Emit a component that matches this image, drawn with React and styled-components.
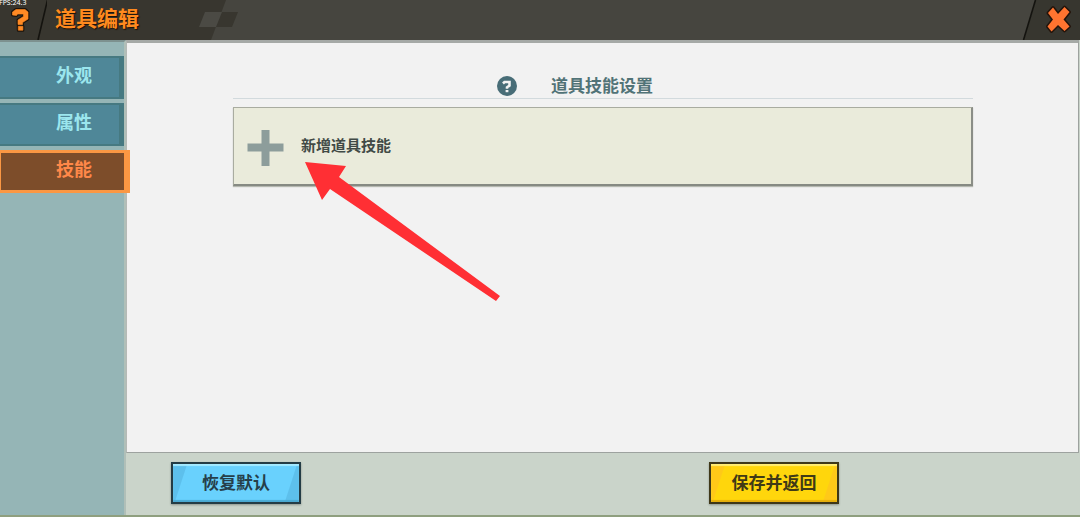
import React, { useState } from "react"
import styled, { createGlobalStyle } from "styled-components"

const GlobalStyle = createGlobalStyle`
    * {
        box-sizing: border-box;
    }

    body {
        margin: 0;
        font-family: "Noto Sans CJK SC", "Noto Sans", sans-serif;
        font-weight: 700;
    }

    button {
        font: inherit;
        color: inherit;
        cursor: pointer;
    }
`
const Page = styled.div`
    display: flex;
    flex-direction: column;
    min-height: 100vh;
    background: #cad4ca;
    border-bottom: 2px solid #8f9f7f;
`

//Top bar
const Header = styled.header`
    position: relative;
    display: flex;
    height: 40px;
    background: #46453f;
`
const Fps = styled.span`
    position: absolute;
    top: -1px;
    left: -1px;
    font-family: "Noto Sans", sans-serif;
    font-size: 7px;
    font-weight: 400;
    line-height: 8px;
    color: #fff;
`
const TitleArea = styled.div`
    display: flex;
    align-items: center;
    background: #38362f;
`
const IconButton = styled.button`
    display: block;
    padding: 0;
    border: 0;
    background: none;

    svg {
        display: block;
    }
`
const Title = styled.h1`
    margin: 0 0 6px;
    padding: 0 8px;
    width: 144px;
    font-size: 21px;
    line-height: 28px;
    color: #ff8a1f;
    text-shadow: 1px 1px 1px #1c1005;
`
const Checker = styled.svg`
    display: block;
    flex: none;
`
const CloseArea = styled.div`
    margin-left: auto;
`

//Side tabs
const Body = styled.div`
    display: flex;
    flex: 1;
`
const Side = styled.nav`
    display: flex;
    flex-direction: column;
    gap: 4px;
    width: 126px;
    padding-top: 14px;
    background: #95b5b6;
    border-right: 2px solid #b0bfb8;
    border-top: 2px solid #7d918f;
`
const Tab = styled.button`
    position: relative;
    height: 43px;
    width: ${(p) => (p.$active ? "130px" : "124px")};
    padding: ${(p) => (p.$active ? "0 0 8px 55px" : "0 0 8px 56px")};
    text-align: left;
    font-size: 18px;
    line-height: 24px;
    border: 0 solid;
    border-color: ${(p) => (p.$active ? "#fb9743" : "#467981")};
    border-width: ${(p) => (p.$active ? "3px 6px 3px 1px" : "2px 5px 2px 0")};
    background: ${(p) => (p.$active ? "#7d4d2a" : "#4f8798")};
    color: ${(p) => (p.$active ? "#ff8849" : "#9be6ee")};
`

//Content
const Main = styled.main`
    display: flex;
    flex-direction: column;
    flex: 1;
`
const Panel = styled.section`
    flex: 1;
    margin-right: 1px;
    padding: 30px 105px 30px 106px;
    background: #f2f2f2;
    border: 1px solid #9da29f;
    border-top: 3px solid #a5a9a6;
    border-left-color: #b5b9b6;
`
const Heading = styled.div`
    display: grid;
    grid-template-columns: 1fr auto 1fr;
    align-items: center;
    column-gap: 34px;
    height: 26px;
    margin-bottom: 8px;
    border-bottom: 1px solid #d2dadd;

    h2 {
        margin: 0;
        padding: 0 2px 2px 0;
        font-size: 17px;
        line-height: 22px;
        color: #517377;
    }
`
const HelpButton = styled(IconButton)`
    justify-self: end;
`
const Skills = styled.div`
    position: relative;
`
const AddSkill = styled.button`
    display: flex;
    align-items: center;
    gap: 17px;
    width: 100%;
    height: 79px;
    padding: 2px 13px 0;
    border: 1px solid #a9aca0;
    border-right: 2px solid #8b8e87;
    border-bottom: 2px solid #868a83;
    box-shadow: 0 1px 1px #b5b8b0;
    background: #eaebdb;
    color: #414a46;
    font-size: 15px;

    span {
        padding-bottom: 4px;
        line-height: 20px;
    }
`
const Arrow = styled.svg`
    position: absolute;
    top: 55px;
    left: 72px;
    pointer-events: none;
`

//Bottom buttons
const Footer = styled.footer`
    display: flex;
    justify-content: space-between;
    padding: 9px 241px 11px 45px;
`
const ActionButton = styled.button`
    width: 130px;
    height: 42px;
    padding: 0 0 2px;
    font-size: 17px;
    line-height: 24px;
    border: 2px solid ${(p) => p.$edge};
    box-shadow: 0 1px 2px #8b948c, inset 0 2px 1px ${(p) => p.$light}, inset 0 -2px 1px ${(p) => p.$dark};
    background: linear-gradient(
        108deg,
        ${(p) => p.$shine} 0 13px,
        ${(p) => p.$face} 14px calc(100% - 14px),
        ${(p) => p.$shine} calc(100% - 13px)
    );
    color: ${(p) => p.$ink};
`

function QuestionIcon() {
    const mark = "M12.5 12L16 9.5H25L28 12V19L22.5 22.5V24.5H18V20L23.5 16.5V14H17.5L16.5 15.5L12.5 15zM18.3 26.3h4.6v3.9h-4.6z"

    return (
        <svg width="47" height="40" viewBox="0 0 47 40" aria-hidden="true">
            <path d={mark} fill="#1d140c" stroke="#1d140c" strokeWidth="3" strokeLinejoin="round" />
            <path d={mark} fill="#ff8a24" stroke="#ff8a24" strokeWidth="0.6" strokeLinejoin="round" />
            <path d="M47.5 0 L38 40" stroke="#14130f" strokeWidth="1.6" />
        </svg>
    )
}

function CloseIcon() {
    const cross = "M31 7.5L36 14L42.5 7L47.5 12L41.5 19.5L47.5 26.5L42.5 31L36 25L29.5 31.5L25.5 26.5L31 19.5L26 13z"

    return (
        <svg width="58" height="40" viewBox="0 0 58 40" aria-hidden="true">
            <path d="M14 0H58V40H2z" fill="#37362f" />
            <path d="M13.5 0L1.5 40" stroke="#14130f" strokeWidth="1.6" />
            <path d={cross} fill="#24140b" stroke="#24140b" strokeWidth="3" strokeLinejoin="round" />
            <path d={cross} fill="#ff7430" />
        </svg>
    )
}

function HelpIcon() {
    return (
        <svg width="20" height="20" viewBox="0 0 20 20" fill="none" aria-hidden="true">
            <circle cx="10" cy="10" r="10" fill="#486d77" />
            <path d="M6 7.5L7.5 6H12.5V9.5L10 11.3V12.7" stroke="#f2f2f2" strokeWidth="2.6" />
            <path d="M8.6 14h2.8v2.2H8.6z" fill="#f2f2f2" />
        </svg>
    )
}

function PlusIcon() {
    return (
        <svg width="37" height="37" viewBox="0 0 37 37" aria-hidden="true">
            <path d="M14.5 1h8v13.5H36.5v8H22.5V37h-8V22.5H.5v-8h14z" fill="#8d9d9b" />
        </svg>
    )
}

const tabs = ["外观", "属性", "技能"]

export default function App() {
    const [current, setCurrent] = useState("技能")

    return (
        <Page>
            <GlobalStyle />
            <Header>
                <TitleArea>
                    <IconButton type="button" aria-label="帮助">
                        <QuestionIcon />
                    </IconButton>
                    <Title>道具编辑</Title>
                </TitleArea>
                <Checker width="60" height="40" viewBox="0 0 60 40" aria-hidden="true">
                    <path d="M0 0H35L20 40H0z" fill="#38362f" />
                    <path d="M14 12H32L26 27H8z" fill="#4b4a44" />
                    <path d="M31 12H47L41 27H25z" fill="#38362f" />
                </Checker>
                <CloseArea>
                    <IconButton type="button" aria-label="关闭">
                        <CloseIcon />
                    </IconButton>
                </CloseArea>
                <Fps>FPS:24.3</Fps>
            </Header>

            <Body>
                <Side>
                    {tabs.map((name) => (
                        <Tab
                            key={name}
                            type="button"
                            $active={name === current}
                            onClick={() => setCurrent(name)}
                        >
                            {name}
                        </Tab>
                    ))}
                </Side>

                <Main>
                    <Panel>
                        <Heading>
                            <HelpButton type="button" aria-label="说明">
                                <HelpIcon />
                            </HelpButton>
                            <h2>道具技能设置</h2>
                        </Heading>
                        <Skills>
                            <AddSkill type="button">
                                <PlusIcon />
                                <span>新增道具技能</span>
                            </AddSkill>
                            <Arrow width="196" height="140" viewBox="0 0 196 140" aria-hidden="true">
                                <path d="M0 0L41 4L34 15L195 134L191 139L25 27L17 38z" fill="#ff2f34" />
                            </Arrow>
                        </Skills>
                    </Panel>

                    <Footer>
                        <ActionButton
                            type="button"
                            $face="#69d1fd"
                            $shine="#5dc0ec"
                            $light="#a5eaff"
                            $dark="#4aa9d2"
                            $edge="#243c45"
                            $ink="#263f4a"
                        >
                            恢复默认
                        </ActionButton>
                        <ActionButton
                            type="button"
                            $face="#ffd60c"
                            $shine="#ffc918"
                            $light="#ffed75"
                            $dark="#e5ae0c"
                            $edge="#3e3718"
                            $ink="#403a16"
                        >
                            保存并返回
                        </ActionButton>
                    </Footer>
                </Main>
            </Body>
        </Page>
    )
}
